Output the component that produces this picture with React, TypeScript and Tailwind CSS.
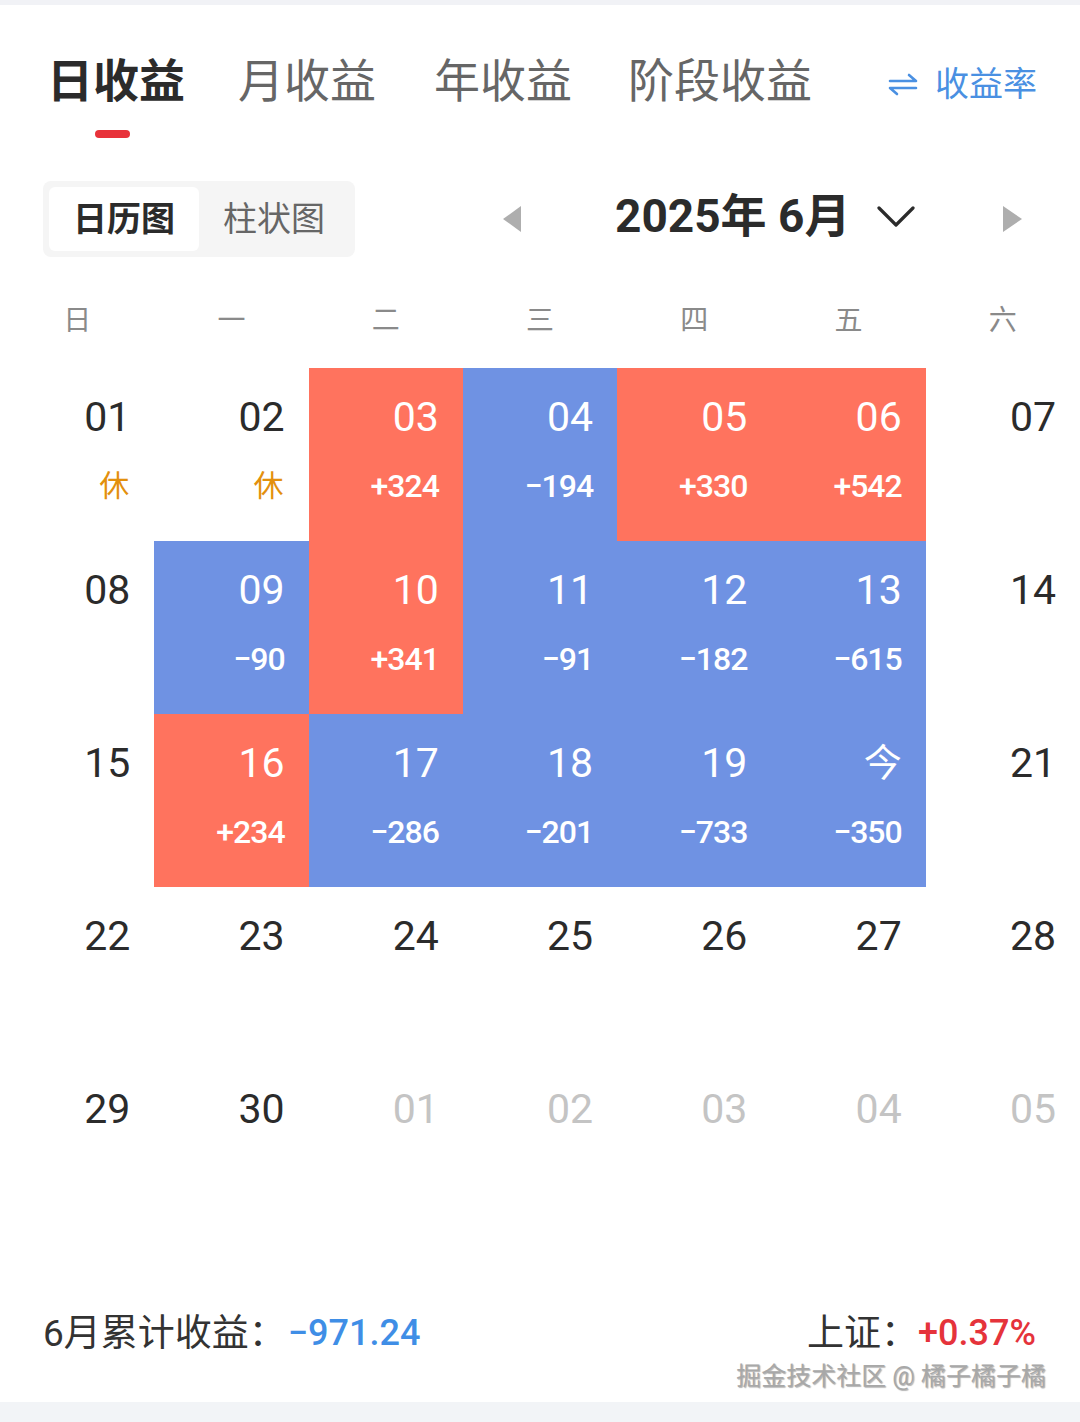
import React from 'react';

type Cell = { d: string; v?: string; tone?: 'up' | 'down' | 'rest' | 'next' };

const rows: Cell[][] = [
  [
    { d: '01', v: '休', tone: 'rest' },
    { d: '02', v: '休', tone: 'rest' },
    { d: '03', v: '+324', tone: 'up' },
    { d: '04', v: '−194', tone: 'down' },
    { d: '05', v: '+330', tone: 'up' },
    { d: '06', v: '+542', tone: 'up' },
    { d: '07' },
  ],
  [
    { d: '08' },
    { d: '09', v: '−90', tone: 'down' },
    { d: '10', v: '+341', tone: 'up' },
    { d: '11', v: '−91', tone: 'down' },
    { d: '12', v: '−182', tone: 'down' },
    { d: '13', v: '−615', tone: 'down' },
    { d: '14' },
  ],
  [
    { d: '15' },
    { d: '16', v: '+234', tone: 'up' },
    { d: '17', v: '−286', tone: 'down' },
    { d: '18', v: '−201', tone: 'down' },
    { d: '19', v: '−733', tone: 'down' },
    { d: '今', v: '−350', tone: 'down' },
    { d: '21' },
  ],
  [{ d: '22' }, { d: '23' }, { d: '24' }, { d: '25' }, { d: '26' }, { d: '27' }, { d: '28' }],
  [
    { d: '29' },
    { d: '30' },
    { d: '01', tone: 'next' },
    { d: '02', tone: 'next' },
    { d: '03', tone: 'next' },
    { d: '04', tone: 'next' },
    { d: '05', tone: 'next' },
  ],
];

const weekdays = ['日', '一', '二', '三', '四', '五', '六'];

const DayCell = ({ cell }: { cell: Cell }) => {
  const filled = cell.tone === 'up' || cell.tone === 'down';
  const bg = cell.tone === 'up' ? 'bg-[#ff735e]' : cell.tone === 'down' ? 'bg-[#6f92e3]' : '';
  const dateColor = filled ? 'text-white' : cell.tone === 'next' ? 'text-[#c4c4c4]' : 'text-[#2b2b2b]';
  const dateFont = cell.d === '今' ? 'text-[38px]' : 'text-[41px]';
  return (
    <div className={`h-[173px] flex flex-col items-end pr-[24px] pt-[29px] ${bg}`}>
      <div className={`h-[40px] leading-none flex items-center ${dateFont} ${dateColor}`}>{cell.d}</div>
      {cell.v && (
        <div
          className={`mt-[33px] h-[32px] leading-none flex items-center ${
            cell.tone === 'rest' ? 'text-[30px] text-[#e3900d] pr-[1px]' : 'text-[32px] font-medium tracking-[-1px] text-white'
          }`}
        >
          {cell.v}
        </div>
      )}
    </div>
  );
};

export default function App() {
  return (
    <div
      className="w-[1080px] h-[1422px] flex flex-col bg-white text-[#2b2b2b]"
      style={{ fontFamily: 'Roboto, "Noto Sans CJK SC", sans-serif' }}
    >
      <div className="h-[5px] bg-[#f1f2f6]" />

      {/* tabs */}
      <div className="flex items-start pt-[53px] pl-[47px] pr-[43px]">
        <div className="flex flex-col">
          <span className="text-[46px] leading-none font-bold text-[#2b2b2b]">日收益</span>
          <span className="mt-[26px] ml-[48px] w-[35px] h-[8px] rounded-full bg-[#e8323a]" />
        </div>
        <span className="ml-[53px] text-[46px] leading-none text-[#666]">月收益</span>
        <span className="ml-[58px] text-[46px] leading-none text-[#666]">年收益</span>
        <span className="ml-[56px] text-[46px] leading-none text-[#666]">阶段收益</span>
        <div className="ml-auto mt-[9px] h-[34px] flex items-center gap-[17px] text-[#4a90e2]">
          <svg width="30" height="26" viewBox="0 0 30 26" fill="none" stroke="#4a90e2" strokeWidth="2.6" strokeLinecap="round" strokeLinejoin="round">
            <path d="M2 10H28L21 4" />
            <path d="M28 17H2L9 23" />
          </svg>
          <span className="text-[34px] leading-none">收益率</span>
        </div>
      </div>

      {/* toggle + month nav */}
      <div className="mt-[43px] flex items-center pl-[43px]">
        <div className="h-[76px] p-[6px] flex rounded-lg bg-[#f5f5f5]">
          <div className="w-[150px] flex items-center justify-center rounded-md bg-white text-[34px] font-bold text-[#2b2b2b]">
            日历图
          </div>
          <div className="w-[150px] flex items-center justify-center text-[34px] text-[#666]">柱状图</div>
        </div>
        <svg className="ml-[148px]" width="18" height="26" viewBox="0 0 18 26">
          <polygon points="18,0 18,26 0,13" fill="#aeaeae" />
        </svg>
        <span className="ml-[94px] -mt-[6px] text-[46px] leading-none font-bold text-[#2b2b2b]">2025年 6月</span>
        <svg className="ml-[27px] -mt-[4px]" width="38" height="24" viewBox="0 0 38 24" fill="none" stroke="#2b2b2b" strokeWidth="3.2" strokeLinecap="round" strokeLinejoin="round">
          <path d="M2 3L19 20L36 3" />
        </svg>
        <svg className="ml-[88px]" width="19" height="26" viewBox="0 0 19 26">
          <polygon points="0,0 0,26 19,13" fill="#aeaeae" />
        </svg>
      </div>

      {/* weekdays */}
      <div className="mt-[50px] grid grid-cols-7">
        {weekdays.map((w) => (
          <div key={w} className="h-[28px] flex items-center justify-center text-[28px] leading-none text-[#8a8a8a]">
            {w}
          </div>
        ))}
      </div>

      {/* calendar */}
      <div className="mt-[33px] grid grid-cols-7">
        {rows.map((r, ri) => r.map((c, ci) => <DayCell key={`${ri}-${ci}`} cell={c} />))}
      </div>

      {/* summary */}
      <div className="mt-[82px] h-[36px] flex items-center justify-between pl-[43px] pr-[44px]">
        <div className="flex items-center">
          <span className="text-[37px] leading-none text-[#333]">6月累计收益：</span>
          <span className="ml-[2px] text-[36px] leading-none font-medium text-[#3f8ee6]">−971.24</span>
        </div>
        <div className="flex items-center">
          <span className="text-[37px] leading-none text-[#333]">上证：</span>
          <span className="text-[36px] leading-none font-medium text-[#e5333b]">+0.37%</span>
        </div>
      </div>
      <div className="mt-[13px] flex justify-end pr-[34px]">
        <span className="text-[25px] leading-none text-[#a8a8a8] [text-shadow:1px_1px_1px_rgba(0,0,0,0.3)]">
          掘金技术社区 @ 橘子橘子橘
        </span>
      </div>

      <div className="flex-1" />
      <div className="h-[20px] bg-[#f2f4f7]" />
    </div>
  );
}
